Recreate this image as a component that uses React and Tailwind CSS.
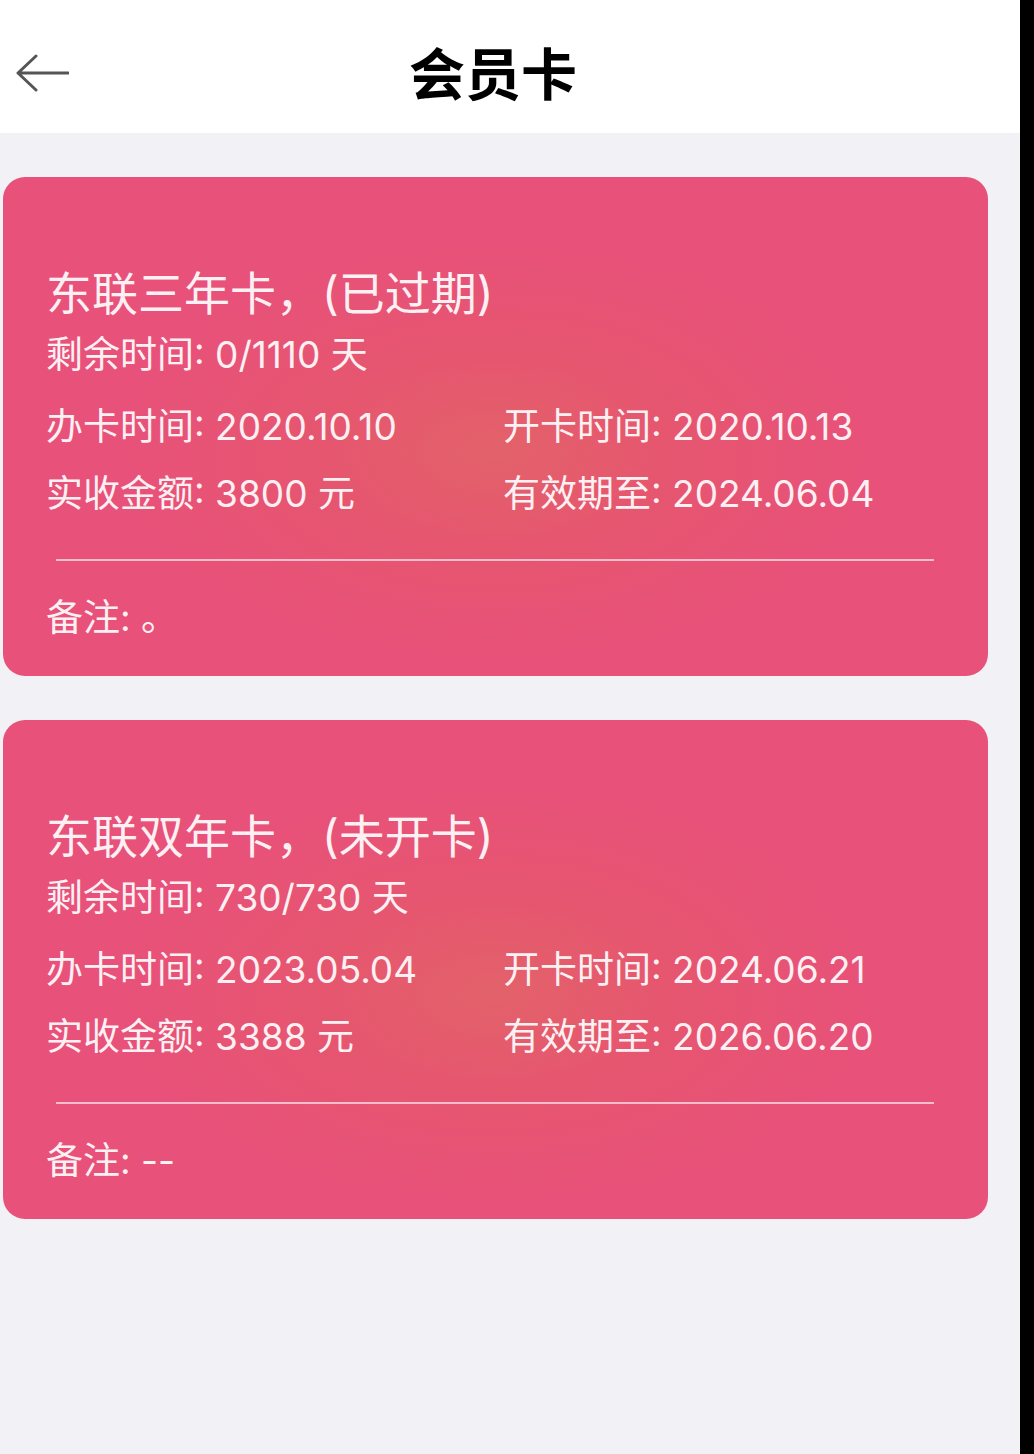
import React from "react";

const cards = [
  {
    name: "东联三年卡，(已过期)",
    remain: "0/1110 天",
    applied: "2020.10.10",
    opened: "2020.10.13",
    paid: "3800 元",
    expires: "2024.06.04",
    note: "。",
  },
  {
    name: "东联双年卡，(未开卡)",
    remain: "730/730 天",
    applied: "2023.05.04",
    opened: "2024.06.21",
    paid: "3388 元",
    expires: "2026.06.20",
    note: "--",
  },
];

function BackArrow() {
  return (
    <svg width="54" height="38" viewBox="0 0 54 38" fill="none" className="mt-[4px]">
      <path
        d="M3 19 H53 M21 2 L3 19 L21 36"
        stroke="#555"
        strokeWidth="3"
        strokeLinecap="round"
        strokeLinejoin="round"
      />
    </svg>
  );
}

function MemberCard({ card }) {
  return (
    <div
      className="ml-[3px] w-[985px] rounded-[22px] bg-[radial-gradient(ellipse_at_50%_55%,#e3626a_0%,#e6566f_25%,#e8517a_55%)] pl-[43px] pt-[93px] pb-[38px] text-[#fdf0f3]"
      style={{ fontFamily: 'Inter, "Noto Sans CJK SC", sans-serif' }}
    >
      {/* title */}
      <p className="text-[46px] leading-[46px]">{card.name}</p>
      <p className="mt-[19px] text-[37px] leading-[40px]">剩余时间: {card.remain}</p>

      <div className="mt-[32px] grid grid-cols-[457px_1fr] gap-y-[27px] text-[37px] leading-[40px]">
        <p>办卡时间: {card.applied}</p>
        <p>开卡时间: {card.opened}</p>
        <p>实收金额: {card.paid}</p>
        <p>有效期至: {card.expires}</p>
      </div>

      <div className="mt-[45px] ml-[10px] h-[2px] w-[878px] bg-[#f8bccd]" />

      <p className="mt-[37px] text-[37px] leading-[40px]">备注: {card.note}</p>
    </div>
  );
}

export default function App() {
  return (
    <div
      className="flex h-[1454px] w-[1034px] bg-black"
      style={{ fontFamily: '"Noto Sans CJK SC", "Noto Sans", sans-serif' }}
    >
      <div className="flex w-[1020px] flex-col bg-[#f2f2f6]">
        {/* header */}
        <div className="flex h-[133px] items-center bg-white pl-[15px] pr-[103px] pt-[8px]">
          <BackArrow />
          <h1 className="flex-1 text-center text-[56px] font-bold leading-[60px] text-black">
            会员卡
          </h1>
        </div>

        {/* card list */}
        <div className="flex flex-col gap-[44px] pt-[44px]">
          {cards.map((c) => (
            <MemberCard key={c.name} card={c} />
          ))}
        </div>
      </div>
    </div>
  );
}
